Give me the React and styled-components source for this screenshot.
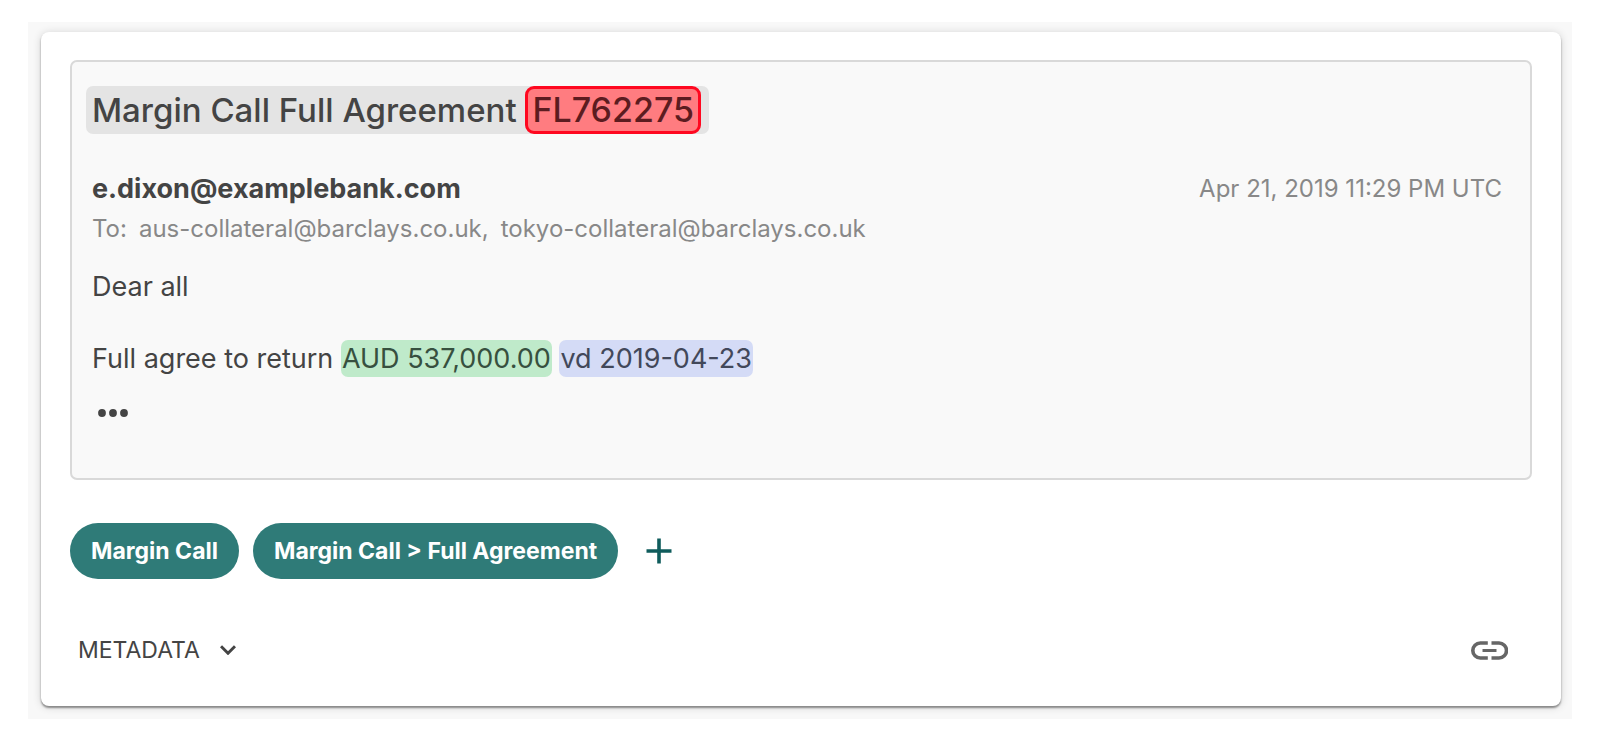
import React, { useState } from 'react'
import styled, { createGlobalStyle } from 'styled-components'

const recipients = ['aus-collateral@barclays.co.uk', 'tokyo-collateral@barclays.co.uk']
const labels = ['Margin Call', 'Margin Call > Full Agreement']

function App() {
  const [open, setOpen] = useState(false)

  return (
    <>
      <GlobalStyle />
      <Page>
        <Card>
          <Message>
            <Subject>
              Margin Call Full Agreement <Reference>FL762275</Reference>
            </Subject>
            <Header>
              <Sender>e.dixon@examplebank.com</Sender>
              <Sent>Apr 21, 2019 11:29 PM UTC</Sent>
            </Header>
            <Recipients>
              <span>To:</span>
              <span>{recipients[0]},</span>
              <span>{recipients[1]}</span>
            </Recipients>
            <Body>
              <p>Dear all</p>
              <p>
                Full agree to return <Entity $color="#bfeaca" $text="#37503f">AUD 537,000.00</Entity>{' '}
                <Entity $color="#d4dbf6" $text="#42485a">vd 2019-04-23</Entity>
              </p>
            </Body>
            <MoreButton type="button" aria-label="Show trimmed content">
              <svg width="30" height="8" viewBox="0 0 30 8" fill="currentColor">
                <circle cx="4" cy="4" r="3.9" />
                <circle cx="15" cy="4" r="3.9" />
                <circle cx="26" cy="4" r="3.9" />
              </svg>
            </MoreButton>
          </Message>
          <Labels>
            {labels.map((label) => (
              <Label type="button" key={label}>{label}</Label>
            ))}
            <AddButton type="button" aria-label="Add label">
              <svg width="26" height="26" viewBox="0 0 26 26" stroke="currentColor" strokeWidth="3.6">
                <path d="M13 0.5v25M0.5 13h25" />
              </svg>
            </AddButton>
          </Labels>
          <Footer>
            <MetadataButton type="button" aria-expanded={open} onClick={() => setOpen(!open)}>
              METADATA
              <svg width="16" height="10" viewBox="0 0 16 10" fill="none" stroke="currentColor" strokeWidth="3">
                <path d="M1 1.2l7 7 7-7" />
              </svg>
            </MetadataButton>
            <CopyLink href="#message" aria-label="Link to message">
              <svg width="37" height="19" viewBox="0 0 37 19" fill="none" stroke="currentColor" strokeWidth="3.6">
                <path d="M16.8 2H9.3a7.5 7.5 0 0 0 0 15h7.5M20.5 2h7.5a7.5 7.5 0 0 1 0 15h-7.5" />
                <path d="M11.5 9.5h14" strokeWidth="3" />
              </svg>
            </CopyLink>
          </Footer>
        </Card>
      </Page>
    </>
  )
}

const GlobalStyle = createGlobalStyle`
  * {
    box-sizing: border-box;
  }
  body {
    margin: 0;
    background: #fff;
    color: #444;
    font-family: Inter, "Liberation Sans", sans-serif;
  }
  p {
    margin: 0;
  }
  button {
    border: 0;
    padding: 0;
    background: none;
    color: inherit;
    font-family: inherit;
    cursor: pointer;
  }
  svg {
    display: block;
  }
`

const Page = styled.main`
  margin: 22px 28px;
  padding: 10px 11px 13px 13px;
  background: #f8f8f8;
`

const Card = styled.article`
  padding: 28px 29px 40px;
  border-radius: 8px;
  background: #fff;
  box-shadow: 0 2px 2px rgba(0, 0, 0, 0.4), 0 1px 8px rgba(0, 0, 0, 0.16);
`

const Message = styled.section`
  padding: 24px 28px 53px 20px;
  border: 2px solid #d9d9d9;
  border-radius: 7px;
  background: #f9f9f9;
`

const Subject = styled.h1`
  width: fit-content;
  margin: 0 0 0 -6px;
  padding: 0 8px 0 6px;
  border-radius: 7px;
  background: #e4e4e4;
  font-size: 33px;
  font-weight: 500;
  line-height: 48px;
`

const Reference = styled.mark`
  display: inline-block;
  padding: 0 4px;
  border: 3px solid #ff0820;
  border-radius: 9px;
  background: #ff7c80;
  color: #5c1c20;
  font-size: 34px;
  line-height: 42px;
`

const Header = styled.header`
  display: flex;
  justify-content: space-between;
  align-items: center;
  margin-top: 35px;
  line-height: 40px;
`

const Sender = styled.strong`
  font-size: 27px;
  font-weight: 700;
`

const Sent = styled.time`
  color: #888;
  font-size: 24px;
`

const Recipients = styled.p`
  display: flex;
  gap: 12px;
  color: #888;
  font-size: 24px;
  line-height: 40px;
`

const Body = styled.div`
  display: flex;
  flex-direction: column;
  gap: 35px;
  margin-top: 19px;
  font-size: 27px;
  line-height: 37px;
`

const Entity = styled.mark`
  display: inline-block;
  padding: 0 1px;
  border-radius: 7px;
  background: ${(props) => props.$color};
  color: ${(props) => props.$text};
`

const MoreButton = styled.button`
  display: block;
  margin-top: 24px;
  padding: 8px 6px;
`

const Labels = styled.div`
  display: flex;
  align-items: center;
  gap: 14px;
  margin-top: 43px;
`

const Label = styled.button`
  padding: 0 21px;
  border-radius: 28px;
  background: #2f7b78;
  && {
    color: #fff;
  }
  font-size: 23px;
  font-weight: 700;
  line-height: 56px;
`

const AddButton = styled.button`
  padding: 14px;
  && {
    color: #0f5c5c;
  }
`

const Footer = styled.footer`
  display: flex;
  justify-content: space-between;
  align-items: center;
  margin-top: 55px;
  padding: 0 24px 0 8px;
`

const MetadataButton = styled.button`
  display: flex;
  align-items: center;
  gap: 20px;
  font-size: 23px;
  line-height: 32px;
`

const CopyLink = styled.a`
  color: #666;
`

export default App
